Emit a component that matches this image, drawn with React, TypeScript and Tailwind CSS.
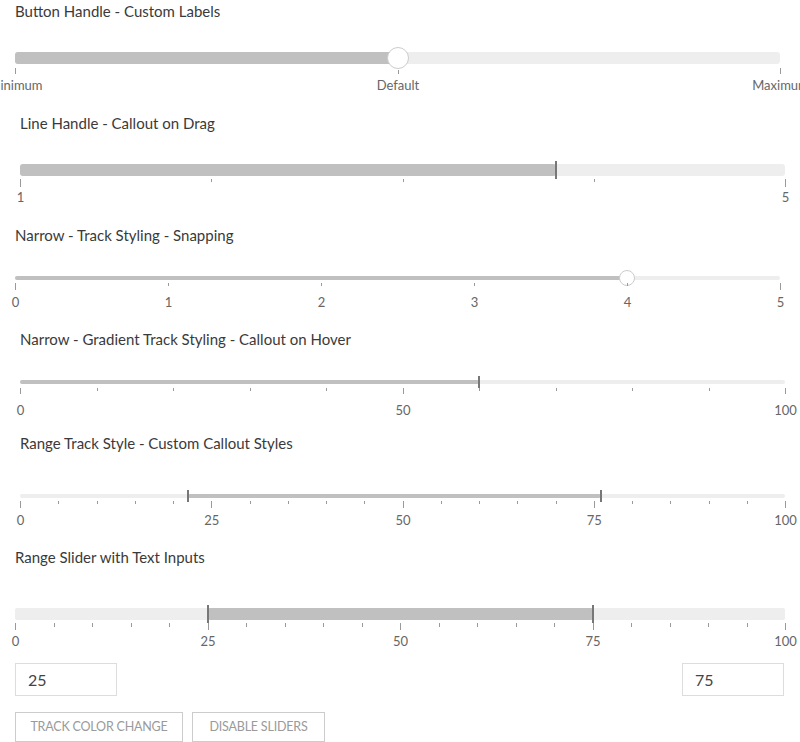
import * as React from "react";

type Tick = { at: number; long?: boolean; label?: string };
type Handle = { at: number; kind: "circle" | "line" };

type SliderProps = {
    className: string;
    trackClass: string;
    fill: [number, number];
    handles: Handle[];
    handleClass: string;
    ticks: Tick[];
    areaClass: string;
    shortClass: string;
    longClass: string;
    labelClass: string;
};

const Slider = ({className, trackClass, fill, handles, handleClass, ticks, areaClass, shortClass, longClass, labelClass}: SliderProps) => {
    return (
        <div className={className}>
            <div className={`relative bg-[#eeeeee] ${trackClass}`}>
                <div
                    className="absolute inset-y-0 bg-[#c0c0c0] rounded-[inherit]"
                    style={{left: `${fill[0] * 100}%`, width: `${(fill[1] - fill[0]) * 100}%`}}
                />
                {handles.map((h, i) => (
                    <div
                        key={i}
                        className={`absolute top-1/2 -translate-x-1/2 -translate-y-1/2 ${handleClass}`}
                        style={{left: `${h.at * 100}%`}}
                    />
                ))}
            </div>
            <div className={`relative ${areaClass}`}>
                {ticks.map((t, i) => (
                    <React.Fragment key={i}>
                        <div
                            className={`absolute w-px bg-[#9a9a9a] ${t.long ? longClass : shortClass}`}
                            style={{left: `${t.at * 100}%`}}
                        />
                        {t.label !== undefined && (
                            <span
                                className={`absolute -translate-x-1/2 whitespace-nowrap text-[13px] leading-4 text-[#666666] ${labelClass}`}
                                style={{left: `calc(${t.at * 100}% + 0.5px)`}}
                            >
                                {t.label}
                            </span>
                        )}
                    </React.Fragment>
                ))}
            </div>
        </div>
    );
};

const steps = (count: number, labelled: (i: number) => string | undefined, long: (i: number) => boolean): Tick[] =>
    Array.from({length: count + 1}, (_, i) => ({at: i / count, label: labelled(i), long: long(i)}));

const circleBig = "w-[22px] h-[22px] rounded-full bg-white border border-[#cccccc]";
const circleSmall = "w-[16px] h-[16px] rounded-full bg-white border border-[#cccccc]";
const lineTall = "w-[2px] h-[18px] bg-[#777777]";
const lineShort = "w-[2px] h-[12px] bg-[#777777]";

const Title = ({children, className}: {children: React.ReactNode; className: string}) => (
    <h2 className={`text-[15px] leading-5 text-[#3a3a3a] ${className}`}>{children}</h2>
);

const App = () => {
    return (
        <div className="w-[800px] h-[742px] overflow-hidden bg-white font-['Lato',sans-serif]">
            <section className="h-[112px] pt-[1px]">
                <Title className="ml-[15px]">Button Handle - Custom Labels</Title>
                <Slider
                    className="ml-[15px] w-[765px] mt-[31px]"
                    trackClass="h-[12px] rounded-[3px]"
                    fill={[0, 0.5]}
                    handles={[{at: 0.5, kind: "circle"}]}
                    handleClass={circleBig}
                    ticks={[
                        {at: 0, long: true, label: "Minimum"},
                        {at: 0.5, label: "Default"},
                        {at: 1, long: true, label: "Maximum"},
                    ]}
                    areaClass="h-[30px]"
                    shortClass="top-[6px] h-[4px]"
                    longClass="top-[4px] h-[6px]"
                    labelClass="top-[13px]"
                />
            </section>

            <section className="h-[112px] pt-[1px]">
                <Title className="ml-[20px]">Line Handle - Callout on Drag</Title>
                <Slider
                    className="ml-[20px] w-[765px] mt-[31px]"
                    trackClass="h-[12px] rounded-[3px]"
                    fill={[0, 0.7]}
                    handles={[{at: 0.7, kind: "line"}]}
                    handleClass={lineTall}
                    ticks={steps(4, i => (i === 0 ? "1" : i === 4 ? "5" : undefined), i => i === 0 || i === 4)}
                    areaClass="h-[30px]"
                    shortClass="top-[3px] h-[3px]"
                    longClass="top-[3px] h-[8px]"
                    labelClass="top-[13px]"
                />
            </section>

            <section className="h-[104px] pt-[1px]">
                <Title className="ml-[15px]">Narrow - Track Styling - Snapping</Title>
                <Slider
                    className="ml-[15px] w-[765px] mt-[31px]"
                    trackClass="h-[4px] rounded-full"
                    fill={[0, 0.8]}
                    handles={[{at: 0.8, kind: "circle"}]}
                    handleClass={circleSmall}
                    ticks={steps(5, i => String(i), i => i === 0 || i === 5)}
                    areaClass="h-[30px]"
                    shortClass="top-[3px] h-[3px]"
                    longClass="top-[3px] h-[7px]"
                    labelClass="top-[14px]"
                />
            </section>

            <section className="h-[104px] pt-[1px]">
                <Title className="ml-[20px]">Narrow - Gradient Track Styling - Callout on Hover</Title>
                <Slider
                    className="ml-[20px] w-[765px] mt-[31px]"
                    trackClass="h-[4px] rounded-full"
                    fill={[0, 0.6]}
                    handles={[{at: 0.6, kind: "line"}]}
                    handleClass={lineShort}
                    ticks={steps(10, i => (i % 5 === 0 ? String(i * 10) : undefined), i => i % 5 === 0)}
                    areaClass="h-[30px]"
                    shortClass="top-[4px] h-[3px]"
                    longClass="top-[4px] h-[6px]"
                    labelClass="top-[18px]"
                />
            </section>

            <section className="h-[113px] pt-[1px]">
                <Title className="ml-[20px]">Range Track Style - Custom Callout Styles</Title>
                <Slider
                    className="ml-[20px] w-[765px] mt-[41px]"
                    trackClass="h-[4px] rounded-full"
                    fill={[0.22, 0.76]}
                    handles={[
                        {at: 0.22, kind: "line"},
                        {at: 0.76, kind: "line"},
                    ]}
                    handleClass={lineShort}
                    ticks={steps(20, i => (i % 5 === 0 ? String(i * 5) : undefined), i => i % 5 === 0)}
                    areaClass="h-[30px]"
                    shortClass="top-[3px] h-[3px]"
                    longClass="top-[3px] h-[7px]"
                    labelClass="top-[14px]"
                />
            </section>

            <section className="pt-[2px]">
                <Title className="ml-[15px]">Range Slider with Text Inputs</Title>
                <Slider
                    className="ml-[15px] w-[770px] mt-[41px]"
                    trackClass="h-[12px] rounded-[2px]"
                    fill={[0.25, 0.75]}
                    handles={[
                        {at: 0.25, kind: "line"},
                        {at: 0.75, kind: "line"},
                    ]}
                    handleClass={lineTall}
                    ticks={steps(20, i => (i % 5 === 0 ? String(i * 5) : undefined), i => i % 5 === 0)}
                    areaClass="h-[28px]"
                    shortClass="top-[3px] h-[4px]"
                    longClass="top-[3px] h-[7px]"
                    labelClass="top-[13px]"
                />

                <div className="ml-[15px] w-[769px] mt-[15px] flex justify-between">
                    <input
                        readOnly
                        value="25"
                        className="w-[102px] h-[33px] border border-[#dddddd] px-3 text-[16px] text-[#444444] outline-none"
                    />
                    <input
                        readOnly
                        value="75"
                        className="w-[102px] h-[33px] border border-[#dddddd] px-3 text-[16px] text-[#444444] outline-none"
                    />
                </div>

                <div className="ml-[15px] mt-[16px] flex gap-[9px]">
                    <button className="w-[168px] h-[30px] border border-[#cccccc] text-[12.5px] tracking-[-0.2px] uppercase text-[#9a9a9a]">
                        Track Color Change
                    </button>
                    <button className="w-[133px] h-[30px] border border-[#cccccc] text-[12.5px] tracking-[-0.2px] uppercase text-[#9a9a9a]">
                        Disable Sliders
                    </button>
                </div>
            </section>
        </div>
    );
};

export default App;
